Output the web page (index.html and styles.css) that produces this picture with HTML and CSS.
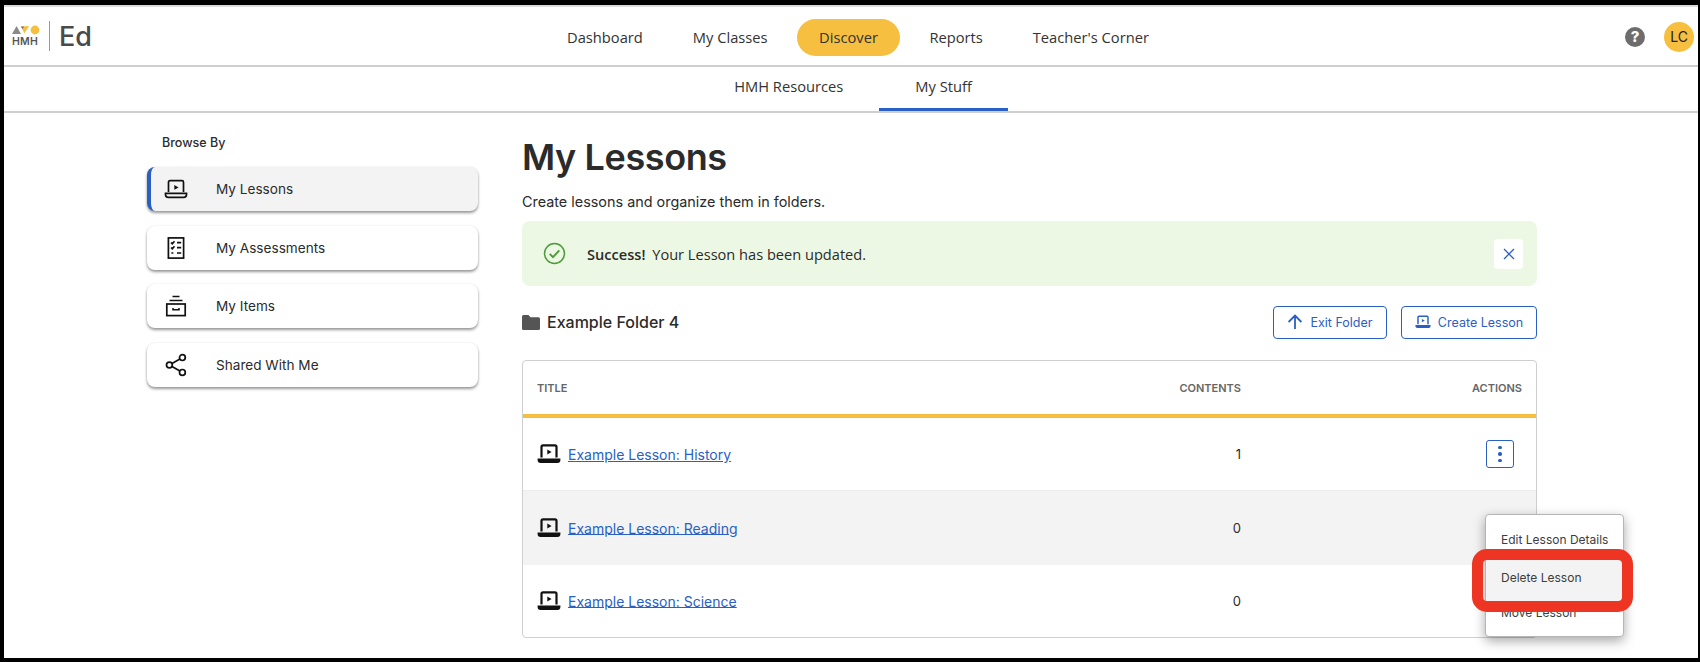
FILE: index.html
```html
<!DOCTYPE html>
<html lang="en">
<head>
    <meta charset="UTF-8">
    <title>My Lessons</title>
    <link rel="stylesheet" href="styles.css">
</head>
<body>
    <div class="frame">
        <header class="topbar">
            <div class="logo">
                <div class="logo-mark">
                    <svg width="28" height="10" viewBox="0 0 28 10">
                        <path d="M0 9 L4.6 1 L9 9 Z" fill="#8a8a8a"/>
                        <path d="M9 1.5 L17 1 L12.5 8.5 Z" fill="#f6bf3f"/>
                        <path d="M9 1.5 L12 1.5 L10.6 4 Z" fill="#6a6a6a"/>
                        <circle cx="23" cy="5" r="4.4" fill="#f6bf3f"/>
                    </svg>
                    <span class="logo-hmh">HMH</span>
                </div>
                <span class="logo-ed">Ed</span>
            </div>
            <nav class="main-nav">
                <a>Dashboard</a>
                <a>My Classes</a>
                <a class="active">Discover</a>
                <a>Reports</a>
                <a>Teacher's Corner</a>
            </nav>
            <div class="user-tools">
                <span class="help">?</span>
                <span class="avatar">LC</span>
            </div>
        </header>

        <nav class="sub-nav">
            <a>HMH Resources</a>
            <a class="active">My Stuff</a>
        </nav>

        <div class="content">
            <aside class="sidebar">
                <h2>Browse By</h2>
                <a class="side-card selected">
                    <svg class="side-icon" viewBox="0 0 24 24"><use href="#laptop-outline"/></svg>
                    My Lessons
                </a>
                <a class="side-card">
                    <svg class="side-icon" viewBox="0 0 24 24" fill="none" stroke="#111" stroke-width="1.7">
                        <rect x="4.4" y="1.9" width="15.2" height="20.2"/>
                        <path d="M7 6.5 l1.3 1.3 l2.2 -2.6 M7 11.5 l1.3 1.3 l2.2 -2.6 M13 6.6 h4.2 M13 11.6 h4.2 M13 17 h4.2 M7.4 17 h2"/>
                    </svg>
                    My Assessments
                </a>
                <a class="side-card">
                    <svg class="side-icon" viewBox="0 0 24 24" fill="none" stroke="#111" stroke-width="1.7">
                        <path d="M8.5 2.5 h7 M5.5 6.5 h13"/>
                        <rect x="2.8" y="10" width="18.4" height="11.6"/>
                        <path d="M9 14 v1.8 h6 v-1.8" stroke-width="1.5"/>
                    </svg>
                    My Items
                </a>
                <a class="side-card">
                    <svg class="side-icon" viewBox="0 0 24 24" fill="none" stroke="#111" stroke-width="1.7">
                        <circle cx="5.4" cy="12" r="2.9"/>
                        <circle cx="18.4" cy="4.6" r="2.9"/>
                        <circle cx="18.4" cy="19.4" r="2.9"/>
                        <path d="M8 10.5 l7.9 -4.5 M8 13.5 l7.9 4.5"/>
                    </svg>
                    Shared With Me
                </a>
            </aside>

            <main class="main">
                <h1>My Lessons</h1>
                <p class="lead">Create lessons and organize them in folders.</p>

                <div class="alert">
                    <svg class="alert-icon" viewBox="0 0 24 24" fill="none" stroke="#4c9a3a" stroke-width="1.6">
                        <circle cx="12" cy="12" r="10.4"/>
                        <path d="M7 12.4 l3.4 3.4 l6.6 -7" stroke-width="2"/>
                    </svg>
                    <p><b>Success!</b> Your Lesson has been updated.</p>
                    <button class="alert-close" aria-label="Close">
                        <svg width="12" height="12" viewBox="0 0 12 12" fill="none" stroke="#2a5fc4" stroke-width="1.3"><path d="M1 1 L11 11 M11 1 L1 11"/></svg>
                    </button>
                </div>

                <div class="folder-row">
                    <svg class="folder-icon" viewBox="0 0 18 15"><path d="M0 1.5 Q0 0 1.5 0 H6.5 L8.5 2.2 H16.5 Q18 2.2 18 3.7 V13.5 Q18 15 16.5 15 H1.5 Q0 15 0 13.5 Z" fill="#555"/></svg>
                    <h3>Example Folder 4</h3>
                    <button class="btn btn-exit">
                        <svg width="16" height="16" viewBox="0 0 16 16" fill="none" stroke="#2a5fc4" stroke-width="1.8"><path d="M8 15 V2 M1.6 8 L8 1.6 L14.4 8"/></svg>
                        Exit Folder
                    </button>
                    <button class="btn btn-create">
                        <svg width="16" height="16" viewBox="0 0 24 24"><use href="#laptop-blue"/></svg>
                        Create Lesson
                    </button>
                </div>

                <div class="table-wrap">
                    <table class="lessons">
                        <thead>
                            <tr>
                                <th class="col-title">Title</th>
                                <th class="col-num">Contents</th>
                                <th class="col-actions">Actions</th>
                            </tr>
                        </thead>
                        <tbody>
                            <tr>
                                <td><svg class="row-icon" viewBox="0 0 24 24"><use href="#laptop-solid"/></svg><a>Example Lesson: History</a></td>
                                <td class="col-num">1</td>
                                <td class="col-actions">
                                    <button class="kebab" aria-label="Actions"><i></i><i></i><i></i></button>
                                </td>
                            </tr>
                            <tr class="shaded">
                                <td><svg class="row-icon" viewBox="0 0 24 24"><use href="#laptop-solid"/></svg><a>Example Lesson: Reading</a></td>
                                <td class="col-num">0</td>
                                <td></td>
                            </tr>
                            <tr>
                                <td><svg class="row-icon" viewBox="0 0 24 24"><use href="#laptop-solid"/></svg><a>Example Lesson: Science</a></td>
                                <td class="col-num">0</td>
                                <td></td>
                            </tr>
                        </tbody>
                    </table>

                    <ul class="menu">
                        <li>Edit Lesson Details</li>
                        <li class="hover">Delete Lesson</li>
                        <li>Move Lesson</li>
                    </ul>
                    <div class="callout"></div>
                </div>
            </main>
        </div>
    </div>

    <svg width="0" height="0" class="defs">
        <defs>
            <g id="laptop-outline">
                <path d="M4.5 15 V5.2 Q4.5 3.6 6 3.6 H18 Q19.5 3.6 19.5 5.2 V15" fill="none" stroke="#111" stroke-width="1.7"/>
                <path d="M1.5 16.4 H22.5 V17.5 Q22.5 20.4 19.6 20.4 H4.4 Q1.5 20.4 1.5 17.5 Z" fill="none" stroke="#111" stroke-width="1.7"/>
                <path d="M10.3 8 L14.6 10.4 L10.3 12.8 Z" fill="#111"/>
            </g>
            <g id="laptop-solid">
                <path d="M4.5 15.5 V5 Q4.5 3.4 6 3.4 H18 Q19.5 3.4 19.5 5 V15.5" fill="none" stroke="#111" stroke-width="2.2"/>
                <path d="M0.6 16.6 H23.4 V18 Q23.4 21 20.4 21 H3.6 Q0.6 21 0.6 18 Z" fill="#111"/>
                <path d="M10.3 7.4 L14.6 9.9 L10.3 12.4 Z" fill="#111"/>
            </g>
            <g id="laptop-blue">
                <path d="M4.5 15.5 V5 Q4.5 3.4 6 3.4 H18 Q19.5 3.4 19.5 5 V15.5" fill="none" stroke="#2a5fc4" stroke-width="2.2"/>
                <path d="M0.6 16.6 H23.4 V18 Q23.4 21 20.4 21 H3.6 Q0.6 21 0.6 18 Z" fill="#2a5fc4"/>
                <path d="M10.3 7.4 L14.6 9.9 L10.3 12.4 Z" fill="#2a5fc4"/>
            </g>
        </defs>
    </svg>
</body>
</html>
```

FILE: styles.css
```css
:root {
    --blue: #2a5fc4;
    --yellow: #f6bf3f;
    --line: #cfcfcf;
    --text: #2b2b2b;
    --shade: #f3f3f3;
    --sans: "Inter", "Liberation Sans", sans-serif;
    --nav-font: "Open Sans", "Noto Sans", sans-serif;
}

* {
    margin: 0;
    padding: 0;
    box-sizing: border-box;
}

html, body {
    height: 662px;
    overflow: hidden;
}

body {
    background-color: #000;
    font-family: var(--sans);
    color: var(--text);
}

.frame {
    height: 662px;
    background-color: #fff;
    border-style: solid;
    border-color: #000;
    border-width: 5px 2px 4px 4px;
    overflow: hidden;
}

.defs {
    position: absolute;
}

/* top bar */
.topbar {
    display: flex;
    align-items: center;
    height: 62px;
    padding-top: 2px;
    border-top: 2px solid #dcdcdc;
    border-bottom: 2px solid var(--line);
}

.logo {
    display: flex;
    align-items: center;
    width: 538px;
    padding-left: 8px;
    margin-top: -2px;
}

.logo-mark {
    display: flex;
    flex-direction: column;
    gap: 1px;
    padding-right: 9px;
    border-right: 1px solid #9a9a9a;
    height: 30px;
    justify-content: center;
}

.logo-hmh {
    font-size: 10.5px;
    font-weight: 600;
    line-height: 11px;
    color: #555;
    letter-spacing: 0.2px;
}

.logo-ed {
    margin-left: 9px;
    font-size: 27px;
    font-weight: 500;
    color: #4a4a4a;
    line-height: 1;
}

.main-nav {
    display: flex;
    align-items: center;
    font-family: var(--nav-font);
    font-size: 14.7px;
    color: #333;
}

.main-nav a {
    display: block;
    padding: 0 25px;
    line-height: 37px;
    border-radius: 19px;
}

.main-nav a.active {
    background-color: var(--yellow);
    padding: 0 22.5px;
    margin: 0 4px;
}

.user-tools {
    display: flex;
    align-items: center;
    gap: 19px;
    margin-left: auto;
    padding-right: 4px;
}

.help {
    width: 20px;
    height: 20px;
    border-radius: 50%;
    background-color: #6d6d6d;
    color: #fff;
    font-size: 15px;
    font-weight: 800;
    line-height: 20px;
    text-align: center;
}

.avatar {
    width: 30px;
    height: 30px;
    border-radius: 50%;
    background-color: var(--yellow);
    font-size: 14px;
    line-height: 30px;
    text-align: center;
    color: #222;
}

.sub-nav {
    display: flex;
    justify-content: center;
    height: 46px;
    padding-left: 4px;
    border-bottom: 2px solid var(--line);
    font-family: var(--nav-font);
    font-size: 14.7px;
    color: #333;
}

.sub-nav a {
    display: block;
    padding: 0 36px;
    line-height: 38px;
    height: 44px;
}

.sub-nav a.active {
    border-bottom: 3px solid var(--blue);
}

/* page */
.content {
    display: flex;
    padding-left: 143px;
}

.sidebar {
    width: 331px;
    flex-shrink: 0;
    padding-top: 22px;
}

.sidebar h2 {
    font-size: 12.5px;
    font-weight: 500;
    line-height: 16px;
    padding-left: 15px;
    margin-bottom: 16px;
}

.side-card {
    display: flex;
    align-items: center;
    height: 44px;
    margin-bottom: 14.5px;
    padding-left: 17px;
    gap: 28px;
    font-size: 13.6px;
    border-radius: 8px;
    background-color: #fff;
    box-shadow: 0 2px 3px rgba(0, 0, 0, 0.4), 0 0 2px rgba(0, 0, 0, 0.08);
}

.side-card.selected {
    background-color: var(--shade);
    border-left: 4px solid var(--blue);
    padding-left: 13px;
}

.side-icon {
    width: 24px;
    height: 24px;
    flex-shrink: 0;
}

.main {
    width: 1015px;
    margin-left: 44px;
    padding-top: 21px;
}

h1 {
    font-size: 36px;
    font-weight: 600;
    line-height: 46px;
    letter-spacing: -0.4px;
}

.lead {
    margin-top: 13px;
    font-size: 14.4px;
    line-height: 18px;
}

.alert {
    display: flex;
    align-items: center;
    height: 65px;
    margin-top: 10px;
    padding: 0 14px 0 21px;
    border-radius: 8px;
    background-color: #edf8e4;
    font-family: var(--nav-font);
    font-size: 14.6px;
}

.alert-icon {
    width: 23px;
    height: 23px;
    margin-right: 21px;
}

.alert b {
    font-weight: 600;
    margin-right: 3px;
}

.alert-close {
    display: flex;
    align-items: center;
    justify-content: center;
    width: 29px;
    height: 30px;
    margin-left: auto;
    border: none;
    border-radius: 4px;
    background-color: #fff;
}

.folder-row {
    display: flex;
    align-items: center;
    margin-top: 20px;
    height: 32px;
}

.folder-icon {
    width: 18px;
    height: 15px;
    margin-right: 7px;
}

.folder-row h3 {
    font-size: 16px;
    font-weight: 500;
}

.btn {
    display: flex;
    align-items: center;
    justify-content: center;
    gap: 7px;
    height: 33px;
    margin-left: 14px;
    border: 1px solid var(--blue);
    border-radius: 4px;
    background-color: #fff;
    color: var(--blue);
    font-family: var(--sans);
    font-size: 12.5px;
}

.btn-exit {
    width: 114px;
    margin-left: auto;
}

.btn-create {
    width: 136px;
}

.table-wrap {
    position: relative;
    margin-top: 22px;
}

.lessons {
    width: 100%;
    height: 278px;
    border-collapse: separate;
    border-spacing: 0;
    border: 1px solid var(--line);
    border-radius: 4px;
    font-size: 14px;
}

.lessons th {
    height: 57px;
    padding: 0 14px;
    border-bottom: 4px solid var(--yellow);
    font-size: 11px;
    font-weight: 600;
    color: #666;
    text-align: left;
    text-transform: uppercase;
}

.lessons td {
    height: 72px;
    padding: 0 14px;
}

.lessons .col-title {
    width: auto;
}

.lessons .col-num {
    width: 200px;
    text-align: right;
    font-size: 13px;
}

.lessons th.col-num {
    font-size: 11px;
}

.lessons .col-actions {
    width: 281px;
    text-align: right;
}

.lessons tr.shaded td {
    height: 74px;
    background-color: var(--shade);
    border-top: 1px solid #ececec;
}

.lessons a {
    color: var(--blue);
    text-decoration: underline;
    vertical-align: middle;
}

.row-icon {
    width: 24px;
    height: 24px;
    margin-right: 7px;
    vertical-align: middle;
}

.kebab {
    display: inline-flex;
    flex-direction: column;
    align-items: center;
    justify-content: center;
    gap: 3px;
    width: 28px;
    height: 28px;
    margin-right: 8px;
    border: 1px solid var(--blue);
    border-radius: 3px;
    background-color: #fff;
    vertical-align: middle;
}

.kebab i {
    width: 3.5px;
    height: 3.5px;
    border-radius: 50%;
    background-color: var(--blue);
}

/* open actions menu and the red callout drawn over it */
.menu {
    position: absolute;
    top: 154px;
    left: 963px;
    width: 139px;
    height: 123px;
    padding-top: 7px;
    list-style: none;
    border: 1px solid #b5b5b5;
    border-radius: 4px;
    background-color: #fff;
    box-shadow: 0 4px 12px rgba(0, 0, 0, 0.35);
    font-size: 12px;
    color: #3d3d3d;
}

.menu li {
    height: 36.5px;
    line-height: 36.5px;
    padding-left: 15px;
}

.menu li.hover {
    background-color: var(--shade);
    height: 44px;
    line-height: 37px;
}

.menu li.hover + li {
    margin-top: -9px;
    padding-top: 1px;
}

.callout {
    position: absolute;
    top: 189px;
    left: 950px;
    width: 161px;
    height: 63px;
    border: 11px solid #ee3524;
    border-radius: 15px;
}
```
